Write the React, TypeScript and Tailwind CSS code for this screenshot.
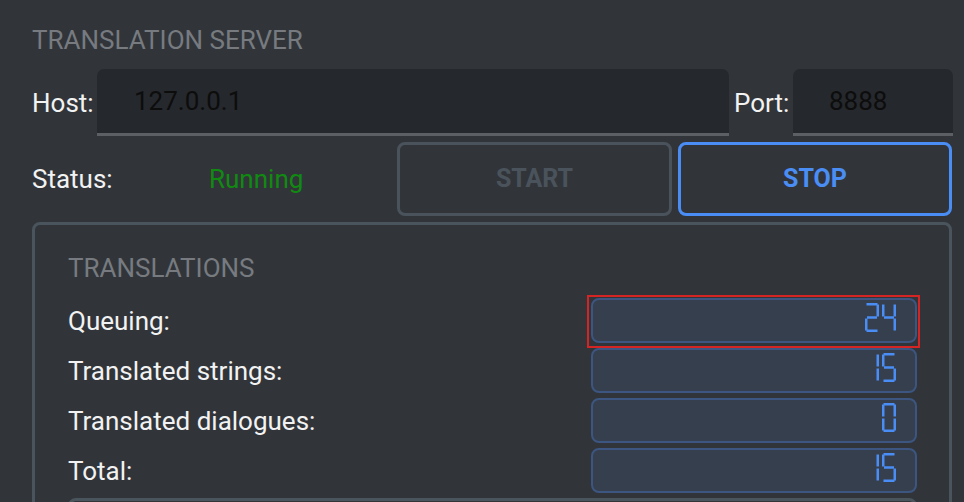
import React from "react";

// seven segment map: a b c d e f g
const SEGMENTS: Record<string, string> = {
  "0": "abcdef",
  "1": "bc",
  "2": "abdeg",
  "3": "abcdg",
  "4": "bcfg",
  "5": "acdfg",
  "6": "acdefg",
  "7": "abc",
  "8": "abcdefg",
  "9": "abcdfg",
};

function Digit({ ch }: { ch: string }) {
  const on = SEGMENTS[ch] ?? "";
  const W = 14;
  const H = 29;
  const t = 2.5;
  const half = H / 2;
  const segs: Record<string, { x: number; y: number; w: number; h: number }> = {
    a: { x: 1.5, y: 0, w: W - 3, h: t },
    b: { x: W - t, y: 1.5, w: t, h: half - 2.5 },
    c: { x: W - t, y: half + 1, w: t, h: half - 2.5 },
    d: { x: 1.5, y: H - t, w: W - 3, h: t },
    e: { x: 0, y: half + 1, w: t, h: half - 2.5 },
    f: { x: 0, y: 1.5, w: t, h: half - 2.5 },
    g: { x: 2, y: half - t / 2, w: W - 4, h: t },
  };
  return (
    <svg width={W} height={H} viewBox={`0 0 ${W} ${H}`}>
      {on.split("").map((s) => {
        const r = segs[s];
        return <rect key={s} x={r.x} y={r.y} width={r.w} height={r.h} fill="#4a8ef5" />;
      })}
    </svg>
  );
}

function Lcd({ value, highlight }: { value: number; highlight?: boolean }) {
  return (
    <div className="relative">
      <div className="w-[326px] h-[45px] bg-[#353f4e] border-2 border-[#3c5681] rounded-[8px] flex justify-end items-start pt-[3px] pr-[19px] gap-[3px]">
        {String(value)
          .split("")
          .map((c, i) => (
            <Digit key={i} ch={c} />
          ))}
      </div>
      {/* focus frame */}
      {highlight && (
        <div className="absolute -left-[4px] -right-[3px] -top-[3px] -bottom-[5px] border-2 border-[#d42424]" />
      )}
    </div>
  );
}

const stats = [
  { label: "Queuing:", value: 24, highlight: true },
  { label: "Translated strings:", value: 15 },
  { label: "Translated dialogues:", value: 0 },
  { label: "Total:", value: 15 },
];

export default function App() {
  return (
    <div className="w-[964px] h-[502px] overflow-hidden bg-[#31353a] font-['Roboto',sans-serif] text-[26px] leading-[30px] text-[#f2f2f2] pl-[32px] pr-[11px]">
      {/* Server */}
      <div className="pt-[25px] text-[#777b80]">TRANSLATION SERVER</div>

      <div className="mt-[14px] flex items-center">
        <span className="w-[65px] shrink-0">Host:</span>
        <div className="w-[632px] h-[67px] shrink-0 bg-[#25282c] rounded-t-[7px] border-b-[3px] border-[#5c6065] flex items-center pl-[37px] text-[#0d0d0d]">
          127.0.0.1
        </div>
        <span className="ml-[5px] w-[59px] shrink-0">Port:</span>
        <div className="w-[160px] h-[67px] shrink-0 bg-[#25282c] rounded-t-[7px] border-b-[3px] border-[#5c6065] flex items-center pl-[36px] text-[#0d0d0d]">
          8888
        </div>
      </div>

      <div className="mt-[6px] w-[920px] flex items-center">
        <span className="w-[177px] shrink-0">Status:</span>
        <span className="flex-1 text-[#118a11]">Running</span>
        <button className="w-[275px] h-[74px] border-[3px] border-[#4a535b] rounded-[8px] font-bold text-[25px] text-[#4a535b]">
          START
        </button>
        <button className="ml-[6px] w-[274px] h-[74px] border-[3px] border-[#4a8ef5] rounded-[8px] font-bold text-[25px] text-[#4a8ef5]">
          STOP
        </button>
      </div>

      {/* Translations */}
      <div className="mt-[6px] w-[920px] border-[3px] border-[#4a545c] rounded-[8px] pl-[33px] pr-[32px] pt-[28px]">
        <div className="text-[#777b80]">TRANSLATIONS</div>
        <div className="mt-[15px] flex flex-col gap-[5px]">
          {stats.map((s) => (
            <div key={s.label} className="flex items-center justify-between">
              <span>{s.label}</span>
              <Lcd value={s.value} highlight={s.highlight} />
            </div>
          ))}
        </div>
        <div className="mt-[5px] h-[40px] border-[3px] border-[#4a545c] rounded-[8px]" />
      </div>
    </div>
  );
}
